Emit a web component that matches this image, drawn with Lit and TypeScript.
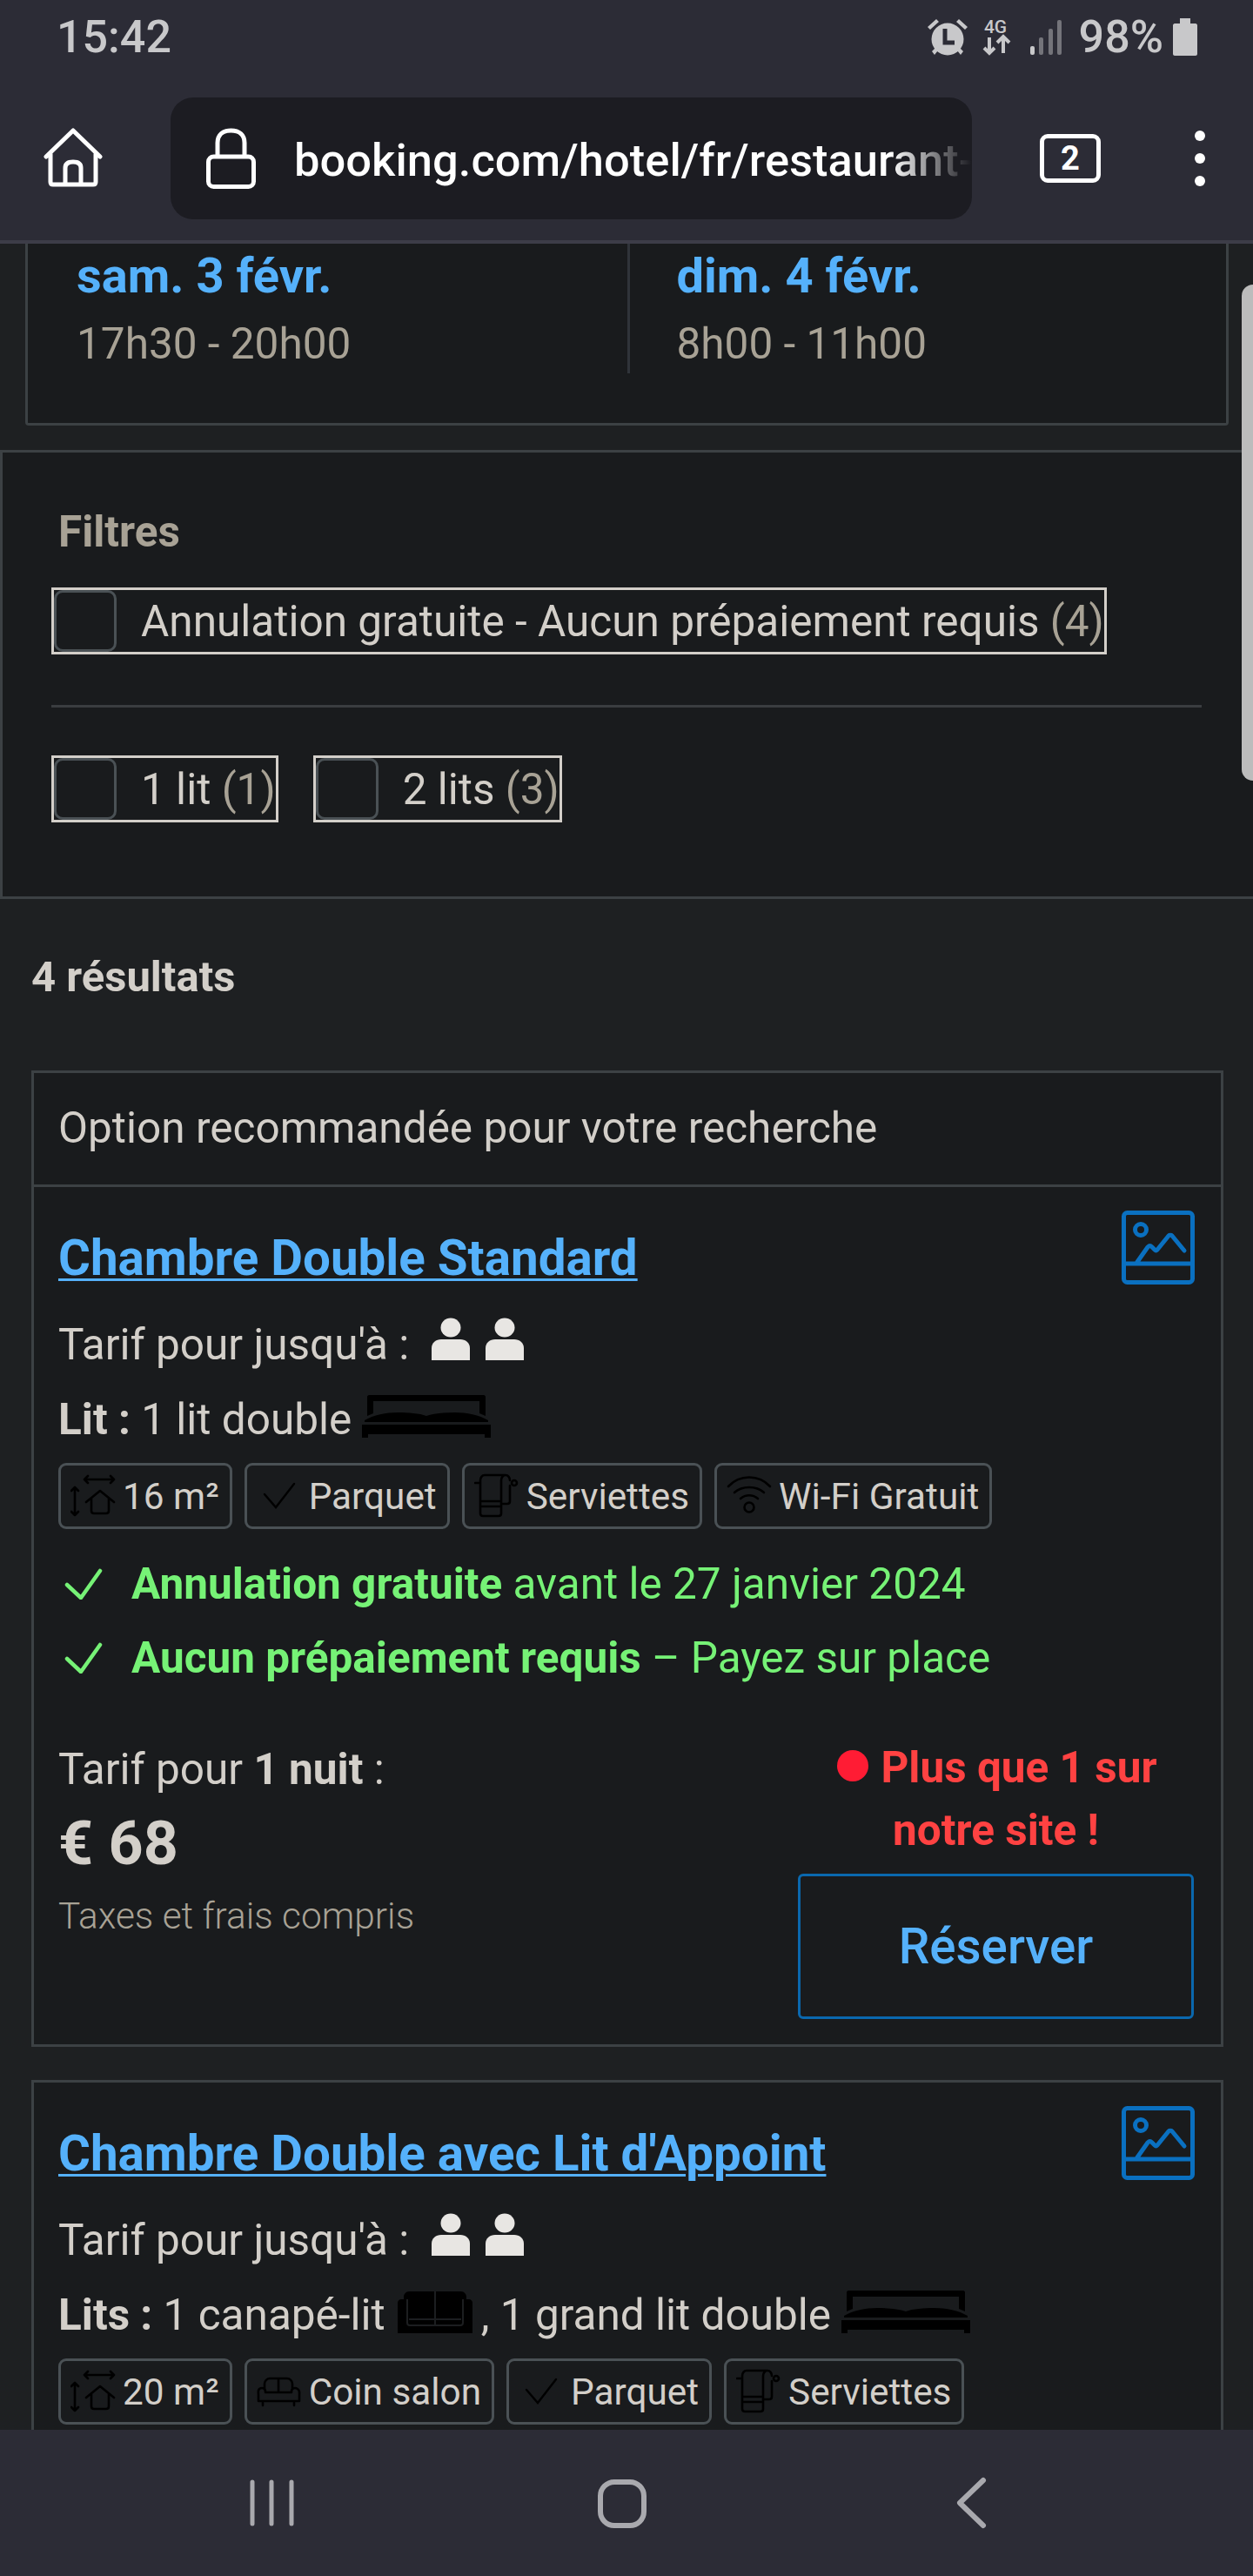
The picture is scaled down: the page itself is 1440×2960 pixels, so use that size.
import { LitElement, html, css, svg } from "lit";
import { customElement } from "lit/decorators.js";

const person = (first = false) => html`<svg class="person ${first ? "first" : ""}" viewBox="0 0 44 49" aria-hidden="true"><ellipse cx="22" cy="11.5" rx="11.5" ry="11" fill="#e8e6e3"/><path d="M0 49V35c0-6 5-10 11-10h22c6 0 11 4 11 10v14z" fill="#e8e6e3"/></svg>`;
const bedIcon = html`<svg class="bed" viewBox="0 0 148 49" aria-hidden="true"><path d="M8 0h132c1 0 2 1 2 2v22l-7-3V7H13v14l-7 3V2c0-1 1-2 2-2zM3 29c10-6 25-9 38-9 12 0 25 1 33 4 8-3 21-4 33-4 13 0 28 3 38 9v2H3zM0 34h148v15h-7v-4H7v4H0z" fill="#000"/></svg>`;
const sofaIcon = html`<svg class="sofa" viewBox="0 0 86 48" aria-hidden="true"><path d="M7 9V6c0-3 3-6 6-6h60c3 0 6 3 6 6v3h3c2 0 4 2 4 4v35H0V13c0-2 2-4 4-4z" fill="#000"/><path d="M11 9v27c0 2 1 3 3 3h58c2 0 3-1 3-3V9M13 32h60M43 0v39" fill="none" stroke="#1c1e20" stroke-width="2"/></svg>`;
const imageIcon = html`<svg class="pic" viewBox="0 0 84 85" aria-hidden="true"><g fill="none" stroke="#0a70c0" stroke-width="5" stroke-linecap="round" stroke-linejoin="round"><rect x="2.5" y="2.5" width="79" height="80" rx="4"/><path d="M3 61h78M18 59l12-17c2-2 3-2 5 0l3 3c1 1 2 1 3 0l13-16c1-1 3-1 4 0l14 17"/><circle cx="22" cy="22" r="6.5"/></g></svg>`;
const checkIcon = html`<svg class="chk" viewBox="0 0 44 36" aria-hidden="true"><path d="M3 19l16 15L41 3" fill="none" stroke="#76f276" stroke-width="4.5" stroke-linecap="round" stroke-linejoin="round"/></svg>`;

const chipSize = svg`<g fill="none" stroke="#000" stroke-width="2.6" stroke-linecap="round" stroke-linejoin="round"><path d="M16 7h34M20 3l-4 4 4 4M46 3l4 4-4 4M5 16v32M1 20l4-4 4 4M1 44l4 4 4-4M18 33L34 20l16 13M24 29v14c0 2 1 3 3 3h14c2 0 3-1 3-3V29"/></g>`;
const chipCheck = svg`<path d="M9 24l13 15L43 12" fill="none" stroke="#000" stroke-width="2.4" stroke-linecap="round"/>`;
const chipTowel = svg`<g fill="none" stroke="#000" stroke-width="2.6" stroke-linecap="round" stroke-linejoin="round"><path d="M1 11h6M7 46V8c0-3 2-6 5-6h24c-3 0-5 3-5 6v38c0 2-1 3-3 3H10c-2 0-3-1-3-3zM7 32h24M7 38h24M36 2c3 0 5 3 5 6M41 14v18c0 2-1 3-3 3h-7"/><circle cx="46" cy="11" r="3"/></g>`;
const chipWifi = svg`<g fill="none" stroke="#000" stroke-width="2.6" stroke-linecap="round"><path d="M2 15c13-14 35-14 48 0M9 22c9-8 25-8 34 0M16 29c6-5 14-5 20 0"/><circle cx="26" cy="39" r="5.5"/></g>`;
const chipSofa = svg`<g fill="none" stroke="#000" stroke-width="2.6" stroke-linecap="round" stroke-linejoin="round"><path d="M9 23v-6c0-3 3-6 6-6h20c3 0 6 3 6 6v6M25 11v16M3 23c3-2 7-1 7 3v1h30v-1c0-4 4-5 7-3s2 5 2 7v7H2v-7c0-2-1-5 1-7zM7 37v5M43 37v5"/></g>`;

const chipIcon = (g: unknown) => html`<svg class="chip-ico" viewBox="0 0 54 52" aria-hidden="true">${g}</svg>`;

@customElement("app-root")
export class AppRoot extends LitElement {
  static styles = css`
    :host { display: block; width: 1440px; height: 2960px; overflow: hidden; font-family: Roboto, "Liberation Sans", sans-serif; background: #1e2022; color: #d3cfc9; }
    .app { display: flex; flex-direction: column; height: 2960px; }

    .status { flex: none; height: 88px; background: #2c2c36; color: #c8c8ca; display: flex; align-items: center; justify-content: space-between; padding: 0 64px 3px 65px; font-size: 52px; font-weight: 500; box-sizing: border-box; }
    .status-right { display: flex; align-items: center; }
    .alarm { width: 46px; height: 42px; margin-right: 16px; }
    .net { width: 34px; height: 42px; margin-right: 22px; overflow: visible; }
    .signal { width: 36px; height: 40px; margin-right: 20px; }
    .batt { width: 28px; height: 43px; margin-left: 11px; }

    .toolbar { flex: none; height: 192px; background: #2c2c36; border-bottom: 4px solid #3d3d48; box-sizing: border-box; display: flex; align-items: flex-start; }
    .home { width: 68px; height: 68px; margin: 59px 0 0 50px; flex: none; }
    .url { flex: none; width: 921px; height: 140px; margin: 24px 0 0 78px; background: #1c1c22; border-radius: 26px; display: flex; align-items: center; box-sizing: border-box; overflow: hidden; }
    .lock { width: 57px; height: 70px; margin-left: 41px; flex: none; }
    .url-text { margin: 4px 0 0 44px; font-size: 52.5px; font-weight: 500; white-space: nowrap; line-height: 70px; background: linear-gradient(90deg, #fff 0, #fff 685px, #1c1c22 778px); -webkit-background-clip: text; background-clip: text; color: transparent; }
    .tabs { flex: none; width: 70px; height: 56px; margin: 66px 0 0 78px; border: 5px solid #fff; border-radius: 9px; box-sizing: border-box; color: #fff; font-size: 38px; font-weight: 700; display: flex; align-items: center; justify-content: center; }
    .dots { flex: none; display: flex; flex-direction: column; gap: 14px; margin: 62px 0 0 108px; }
    .dots i { display: block; width: 12px; height: 12px; border-radius: 50%; background: #fff; }

    .content { flex: 1; min-height: 0; overflow: hidden; position: relative; }
    .dates { margin: 0 28px 0 29px; height: 209px; box-sizing: border-box; background: #191b1d; border: solid #3c4144; border-width: 0 3px 3px; border-radius: 0 0 4px 4px; display: flex; }
    .date { width: 50%; box-sizing: border-box; padding: 7px 0 0 56px; height: 149px; }
    .date + .date { border-left: 3px solid #30343a; padding-left: 54px; }
    .date b { display: block; color: #55b1fb; font-size: 56px; line-height: 60px; font-weight: 700; }
    .date span { display: block; color: #a8a295; font-size: 49.5px; line-height: 56px; margin-top: 20px; }

    .filters { margin-top: 28px; height: 516px; box-sizing: border-box; background: #191b1d; border: solid #3c4144; border-width: 3px 0 3px 3px; padding: 64px 0 0 56px; }
    .filters h3 { margin: 0 0 0 8px; color: #a8a295; font-size: 49.5px; font-weight: 700; line-height: 54px; }
    .opt { display: inline-flex; align-items: center; height: 77px; box-sizing: border-box; border: 3px solid #d3cfc9; font-size: 49.5px; white-space: nowrap; }
    .box { width: 72px; height: 71px; box-sizing: border-box; border: 3px solid #4a5155; border-radius: 10px; margin-right: 28px; flex: none; }
    .opt em { font-style: normal; color: #a8a295; }
    .row1 { margin-top: 37px; display: flex; }
    .sep { height: 3px; background: #3a3d40; margin-top: 58px; width: 1322px; }
    .row2 { margin-top: 55px; display: flex; gap: 40px; }

    .count { font-size: 49px; font-weight: 700; line-height: 54px; padding: 63px 0 0 36px; color: #d3cfc9; }

    .card { margin: 0 34px 0 36px; box-sizing: border-box; border: 3px solid #3c4144; background: #191b1d; }
    .c1 { margin-top: 80px; height: 1122px; }
    .c2 { margin-top: 38px; height: 500px; }
    .card-head { height: 128px; border-bottom: 3px solid #3c4144; font-size: 49.5px; line-height: 126px; padding-left: 28px; }
    .body { padding: 0 28px; position: relative; }
    .pic { position: absolute; right: 30px; width: 84px; height: 85px; top: 27px; }
    .title { display: block; color: #55b1fb; font-size: 56.5px; font-weight: 700; text-decoration: underline; text-decoration-thickness: 3px; text-underline-offset: 4px; line-height: 62px; padding-top: 51px; white-space: nowrap; }
    .line { font-size: 49.5px; line-height: 56px; white-space: nowrap; display: flex; align-items: flex-end; height: 56px; }
    .line b { font-weight: 700; white-space: pre; }
    .line span { white-space: pre; }
    .l1 { margin-top: 40px; }
    .l2 { margin-top: 30px; }
    .person { width: 44px; height: 49px; margin-bottom: 10px; flex: none; }
    .person.first { margin-left: 26px; margin-right: 18px; }
    .bed { width: 148px; height: 49px; flex: none; margin: 0 0 7px 12px; }
    .sofa { width: 86px; height: 48px; flex: none; margin: 0 10px 7px 14px; }
    .chips { display: flex; gap: 14px; margin-top: 22px; }
    .chip { display: flex; align-items: center; height: 76px; box-sizing: border-box; border: 3px solid #4a5155; border-radius: 9px; font-size: 42.3px; white-space: nowrap; padding: 0 12px 0 11px; }
    .chip-ico { width: 54px; height: 52px; margin-right: 6px; flex: none; }

    .ok { display: flex; align-items: center; color: #76f276; font-size: 49.5px; height: 56px; white-space: nowrap; }
    .ok b { font-weight: 700; }
    .ok span { white-space: pre; }
    .chk { width: 44px; height: 36px; margin: 0 33px 0 7px; flex: none; }
    .oks { margin-top: 35px; display: flex; flex-direction: column; gap: 29px; }

    .bottom { display: flex; justify-content: space-between; margin-top: 72px; }
    .price-l { display: flex; flex-direction: column; }
    .nuit { font-size: 49.5px; line-height: 56px; }
    .nuit b { font-weight: 700; }
    .price { font-size: 70px; font-weight: 700; line-height: 80px; margin-top: 17px; }
    .tax { font-size: 42.4px; font-weight: 300; color: #a8a295; line-height: 52px; margin-top: 18px; }
    .price-r { width: 455px; margin-right: 3px; display: flex; flex-direction: column; align-items: center; }
    .red { color: #ff4242; font-weight: 700; font-size: 49.5px; line-height: 72px; text-align: center; margin-top: -10px; display: flex; flex-direction: column; align-items: center; }
    .red .top { display: flex; align-items: center; padding-left: 3px; }
    .dot { width: 36px; height: 36px; border-radius: 50%; background: #ff1c34; margin-right: 14px; margin-top: -4px; flex: none; }
    .btn { width: 455px; height: 167px; box-sizing: border-box; border: 3px solid #0a68ae; border-radius: 6px; color: #55b1fb; font-size: 56.5px; font-weight: 500; margin-top: 14px; display: flex; align-items: center; justify-content: center; }

    .nav { flex: none; height: 168px; background: #2c2c36; position: relative; z-index: 1; }
    .nav svg { display: block; width: 1440px; height: 168px; }

    .scroll { position: absolute; right: 0; top: 47px; width: 13px; height: 570px; background: #bcbcbc; border-radius: 13px 0 0 13px; }
  `;

  render() {
    return html`<div class="app">
      <div class="status">
        <span class="time">15:42</span>
        <div class="status-right">
          <svg class="alarm" viewBox="0 0 46 42" aria-hidden="true"><g fill="#c8c8ca"><circle cx="23" cy="23" r="18.5"/><path d="M0 9L10 0l3 3L3 12zM46 9L36 0l-3 3 10 9zM5 37l4-4 3 3-4 5zM41 37l-4-4-3 3 4 5z"/></g><path d="M20 11v16h11" fill="none" stroke="#2c2c36" stroke-width="5"/></svg>
          <svg class="net" viewBox="0 0 34 42" aria-hidden="true"><text x="16" y="16" font-size="21" font-weight="500" font-family="Roboto, sans-serif" fill="#c8c8ca" text-anchor="middle">4G</text><path d="M9 21v18M3 33l6 6 6-6M25 39V21M18 27l7-7 7 7" fill="none" stroke="#c8c8ca" stroke-width="4"/></svg>
          <svg class="signal" viewBox="0 0 36 40" aria-hidden="true"><rect x="0" y="30" width="5" height="10" rx="2" fill="#c8c8ca"/><rect x="10" y="20" width="5" height="20" rx="2" fill="#74747a"/><rect x="21" y="10" width="5" height="30" rx="2" fill="#74747a"/><rect x="31" y="0" width="5" height="40" rx="2" fill="#74747a"/></svg>
          <span>98%</span>
          <svg class="batt" viewBox="0 0 28 43" aria-hidden="true"><path d="M8 0h12v6h6c1 0 2 1 2 2v33c0 1-1 2-2 2H2c-1 0-2-1-2-2V8c0-1 1-2 2-2h6z" fill="#c8c8ca"/></svg>
        </div>
      </div>

      <div class="toolbar">
        <svg class="home" viewBox="0 0 68 68" aria-hidden="true"><path d="M3 33L34 3l31 30M8 30v32c0 2 1 3 3 3h46c2 0 3-1 3-3V30M25 65V46c0-5 3-7 9-7s9 2 9 7v19" fill="none" stroke="#fff" stroke-width="5" stroke-linecap="round" stroke-linejoin="round"/></svg>
        <div class="url">
          <svg class="lock" viewBox="0 0 57 70" aria-hidden="true"><g fill="none" stroke="#fff" stroke-width="5"><rect x="2.5" y="33" width="52" height="34.5" rx="6"/><path d="M13 33V17C13 8 19 3 28.5 3S44 8 44 17v16"/></g></svg>
          <span class="url-text">booking.com/hotel/fr/restaurant-</span>
        </div>
        <div class="tabs">2</div>
        <div class="dots"><i></i><i></i><i></i></div>
      </div>

      <div class="content">
        <div class="scroll"></div>
        <div class="dates">
          <div class="date"><b>sam. 3 févr.</b><span>17h30 - 20h00</span></div>
          <div class="date"><b>dim. 4 févr.</b><span>8h00 - 11h00</span></div>
        </div>

        <div class="filters">
          <h3>Filtres</h3>
          <div class="row1"><label class="opt"><span class="box"></span><span>Annulation gratuite - Aucun prépaiement requis <em>(4)</em></span></label></div>
          <div class="sep"></div>
          <div class="row2">
            <label class="opt"><span class="box"></span><span>1 lit <em>(1)</em></span></label>
            <label class="opt"><span class="box"></span><span>2 lits <em>(3)</em></span></label>
          </div>
        </div>

        <div class="count">4 résultats</div>

        <div class="card c1">
          <div class="card-head">Option recommandée pour votre recherche</div>
          <div class="body">
            ${imageIcon}
            <a class="title">Chambre Double Standard</a>
            <div class="line l1"><span>Tarif pour jusqu'à :</span>${person(true)}${person()}</div>
            <div class="line l2"><b>Lit : </b><span>1 lit double</span>${bedIcon}</div>
            <div class="chips">
              <div class="chip">${chipIcon(chipSize)}16 m²</div>
              <div class="chip">${chipIcon(chipCheck)}Parquet</div>
              <div class="chip">${chipIcon(chipTowel)}Serviettes</div>
              <div class="chip">${chipIcon(chipWifi)}Wi-Fi Gratuit</div>
            </div>
            <div class="oks">
              <div class="ok">${checkIcon}<b>Annulation gratuite</b><span> avant le 27 janvier 2024</span></div>
              <div class="ok">${checkIcon}<b>Aucun prépaiement requis</b><span> – Payez sur place</span></div>
            </div>
            <div class="bottom">
              <div class="price-l">
                <div class="nuit">Tarif pour <b>1 nuit</b> :</div>
                <div class="price">€ 68</div>
                <div class="tax">Taxes et frais compris</div>
              </div>
              <div class="price-r">
                <div class="red"><div class="top"><i class="dot"></i>Plus que 1 sur</div><div>notre site !</div></div>
                <div class="btn">Réserver</div>
              </div>
            </div>
          </div>
        </div>

        <div class="card c2">
          <div class="body">
            ${imageIcon}
            <a class="title">Chambre Double avec Lit d'Appoint</a>
            <div class="line l1"><span>Tarif pour jusqu'à :</span>${person(true)}${person()}</div>
            <div class="line l2"><b>Lits : </b><span>1 canapé-lit</span>${sofaIcon}<span>, 1 grand lit double</span>${bedIcon}</div>
            <div class="chips">
              <div class="chip">${chipIcon(chipSize)}20 m²</div>
              <div class="chip">${chipIcon(chipSofa)}Coin salon</div>
              <div class="chip">${chipIcon(chipCheck)}Parquet</div>
              <div class="chip">${chipIcon(chipTowel)}Serviettes</div>
            </div>
          </div>
        </div>
      </div>

      <div class="nav">
        <svg viewBox="0 0 1440 168" aria-hidden="true"><g fill="none" stroke="#a9a9ae" stroke-linecap="round" stroke-linejoin="round"><path d="M290 60v48M312 60v48M335 60v48" stroke-width="5"/><rect x="690" y="60" width="50" height="50" rx="16" stroke-width="6"/><path d="M1130 58l-27 26 27 26" stroke-width="6"/></g></svg>
      </div>
    </div>`;
  }
}
